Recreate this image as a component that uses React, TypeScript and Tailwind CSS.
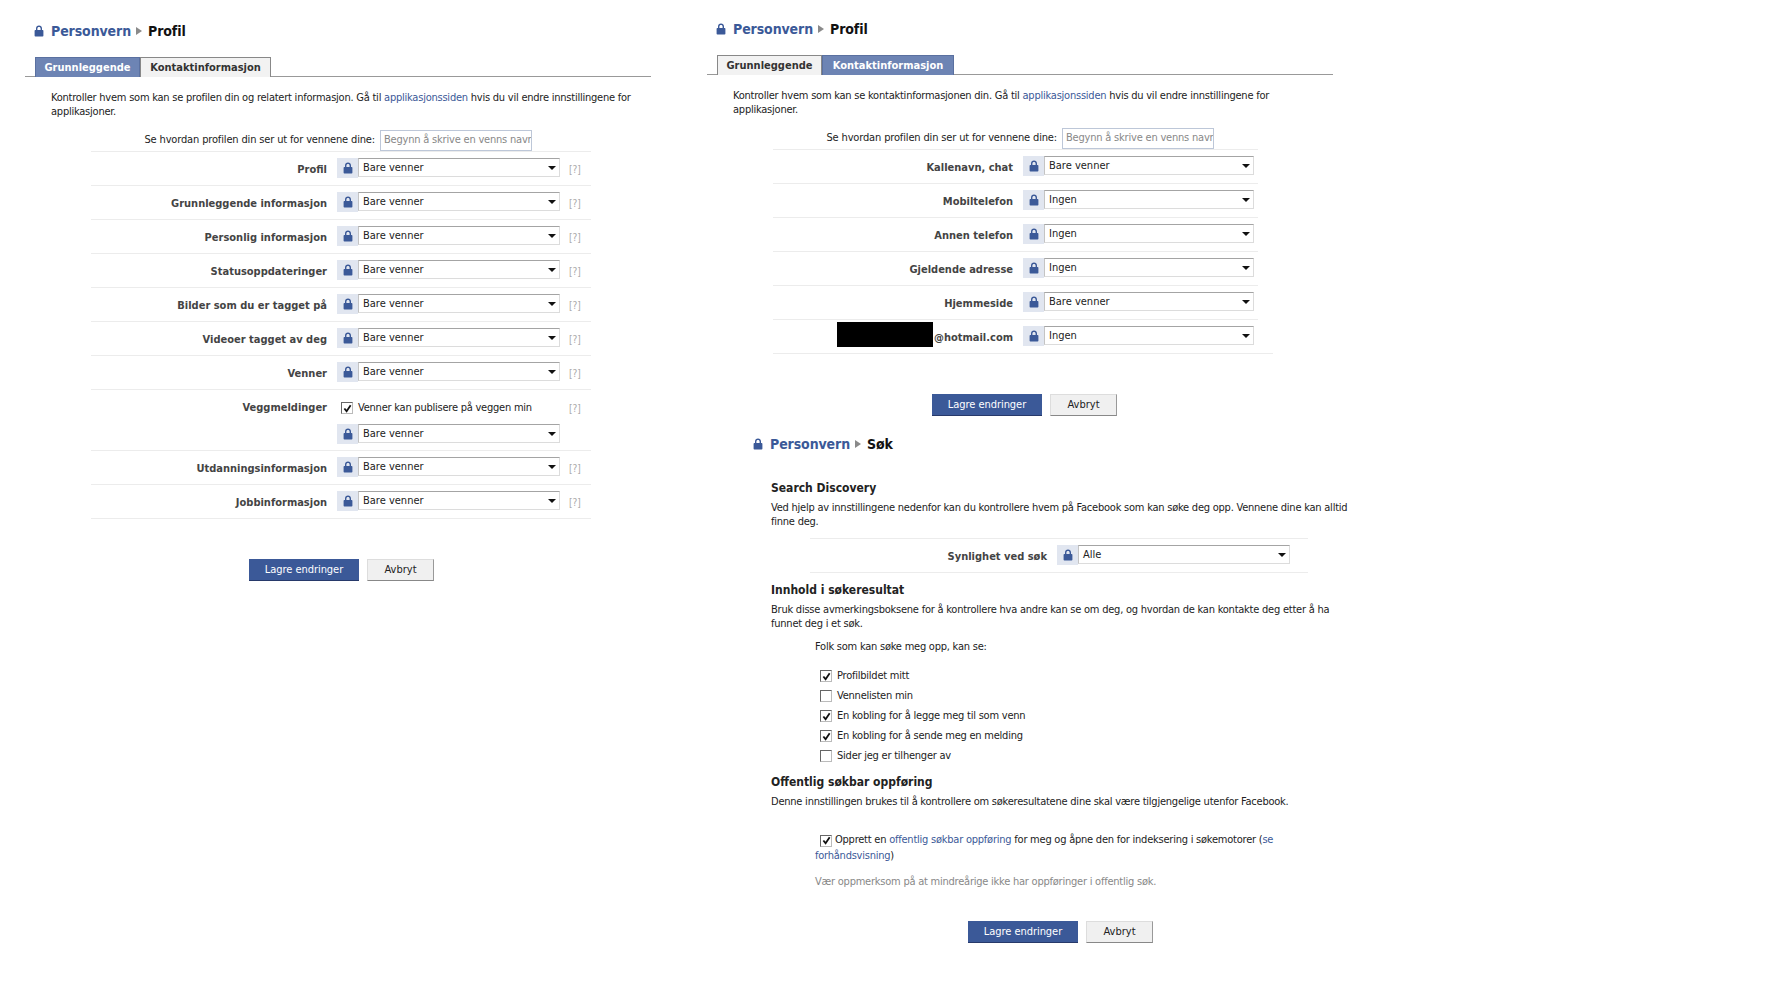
const FONT = "font-['DejaVu_Sans_Condensed','Liberation_Sans',sans-serif]";

function Lock({ className }: { className: string }) {
  return (
    <svg viewBox="0 0 10 12" className={className} fill="#3b5998">
      <path d="M2 5.5V3.6C2 1.8 3.2.6 5 .6s3 1.2 3 3v1.9H6.6V3.7C6.6 2.7 6 2 5 2s-1.6.7-1.6 1.7v1.8z" />
      <rect x="0.6" y="5" width="8.8" height="6.6" rx="0.8" />
    </svg>
  );
}

function Title({ last }: { last: string }) {
  return (
    <div className="flex items-center h-[20px] text-[14px] font-bold leading-[20px] tracking-[-0.1px]">
      <Lock className="w-[10px] h-[12px]" />
      <span className="ml-[7px] text-[#3b5998]">Personvern</span>
      <span className="ml-[5px] w-0 h-0 border-y-[4px] border-y-transparent border-l-[6px] border-l-[#8a8a8a]" />
      <span className="ml-[6px] text-[#111]">{last}</span>
    </div>
  );
}

function Tabs({ active, w1, w2 }: { active: number; w1: string; w2: string }) {
  const on = "bg-[#6d84b4] border-[#5a70a0] text-white";
  const off = "bg-[#f2f2f2] border-[#888] text-[#333]";
  return (
    <div className="flex h-[20px] border-b border-[#999]">
      <div className={`ml-[10px] h-[20px] pt-[1px] flex items-center justify-center border border-b-0 text-[11px] font-bold ${w1} ${active === 0 ? on : off}`}>Grunnleggende</div>
      <div className={`h-[20px] pt-[1px] flex items-center justify-center border border-b-0 text-[11px] font-bold ${w2} ${active === 1 ? on : off}`}>Kontaktinformasjon</div>
    </div>
  );
}

function Select({ value, width }: { value: string; width: string }) {
  return (
    <div className={`h-[19px] flex items-center justify-between pl-[4px] pr-[2px] bg-white border border-[#dcdcdc] border-t-[#a4a4a4] border-l-[#c4c4c4] text-[11px] text-[#222] ${width}`}>
      <span className="pt-[2px]">{value}</span>
      <span className="w-0 h-0 border-x-[4px] border-x-transparent border-t-[4px] border-t-[#111] mr-[1px]" />
    </div>
  );
}

function LockBox() {
  return (
    <div className="w-[21px] h-[20px] bg-[#e1e6f0] flex items-center justify-center">
      <Lock className="w-[10px] h-[12px]" />
    </div>
  );
}

function Check({ checked }: { checked: boolean }) {
  return (
    <span className="shrink-0 w-[12px] h-[12px] flex items-center justify-center bg-white border border-[#bbb] border-t-[#666] border-l-[#666]">
      {checked && (
        <svg viewBox="0 0 10 10" className="w-[9px] h-[9px]">
          <path d="M1.5 5 L4 8 L8.5 1.5" fill="none" stroke="#111" strokeWidth="2" />
        </svg>
      )}
    </span>
  );
}

function Row({ label, value, labelW, selectW, help = true, redacted = false, lineW = "" }: {
  label: string; value: string; labelW: string; selectW: string; help?: boolean; redacted?: boolean; lineW?: string;
}) {
  return (
    <div className={`h-[34px] pt-[6px] border-b border-[#ececec] flex items-start ${lineW}`}>
      <div className={`h-[20px] pt-[4px] flex items-center justify-end text-[11px] font-bold text-[#444] shrink-0 ${labelW}`}>
        {redacted && <span className="w-[96px] h-[25px] mb-[7px] mr-[1px] bg-black shrink-0" />}
        {label}
      </div>
      <div className="ml-[10px] flex">
        <LockBox />
        <Select value={value} width={selectW} />
      </div>
      {help && <span className="ml-[9px] h-[20px] pt-[2px] flex items-center text-[10px] text-[#aaa]">[?]</span>}
    </div>
  );
}

function Buttons({ ml }: { ml: string }) {
  return (
    <div className={`flex ${ml}`}>
      <div className="w-[110px] h-[22px] pt-[2px] flex items-center justify-center bg-[#3b5998] border-b border-[#27396a] text-white text-[11px] tracking-[-0.05px]">Lagre endringer</div>
      <div className="ml-[8px] w-[67px] h-[22px] flex items-center justify-center bg-[#f0f0f0] border border-[#ddd] border-b-[#888] border-r-[#999] text-[#222] text-[11px]">Avbryt</div>
    </div>
  );
}

function SearchRow({ labelW, lineW }: { labelW: string; lineW: string }) {
  return (
    <div className={`h-[22px] flex items-start border-b border-[#ececec] ${lineW}`}>
      <div className={`h-[21px] flex items-center justify-end text-[11px] tracking-[-0.15px] text-[#222] shrink-0 ${labelW}`}>Se hvordan profilen din ser ut for vennene dine:</div>
      <div className="ml-[5px] w-[152px] h-[21px] overflow-hidden whitespace-nowrap flex items-center pl-[3px] border border-[#bdc7d8] text-[11px] tracking-[-0.2px] text-[#888]">Begynn å skrive en venns navn</div>
    </div>
  );
}

const left = ["Profil", "Grunnleggende informasjon", "Personlig informasjon", "Statusoppdateringer", "Bilder som du er tagget på", "Videoer tagget av deg", "Venner"];

const right: [string, string][] = [
  ["Kallenavn, chat", "Bare venner"],
  ["Mobiltelefon", "Ingen"],
  ["Annen telefon", "Ingen"],
  ["Gjeldende adresse", "Ingen"],
  ["Hjemmeside", "Bare venner"],
];

export default function App() {
  return (
    <div className={`w-[1790px] h-[1007px] bg-white flex overflow-hidden ${FONT}`}>
      {/* Left column */}
      <div className="ml-[25px] w-[626px] pt-[21px] shrink-0">
        <div className="ml-[9px]"><Title last="Profil" /></div>
        <div className="mt-[16px]"><Tabs active={0} w1="w-[105px]" w2="w-[131px]" /></div>
        <p className="mt-[14px] ml-[26px] w-[590px] text-[11px] leading-[14px] tracking-[-0.23px] text-[#222]">
          Kontroller hvem som kan se profilen din og relatert informasjon. Gå til <span className="text-[#3b5998]">applikasjonssiden</span> hvis du vil endre innstillingene for applikasjoner.
        </p>
        <div className="mt-[11px] ml-[66px] w-[500px]">
          <SearchRow labelW="w-[284px]" lineW="" />
          {left.map((l) => <Row key={l} label={l} value="Bare venner" labelW="w-[236px]" selectW="w-[202px]" />)}
          <div className="h-[61px] border-b border-[#ececec] pt-[10px] flex items-start">
            <div className="w-[236px] h-[16px] flex items-center justify-end text-[11px] font-bold text-[#444] shrink-0">Veggmeldinger</div>
            <div className="ml-[10px]">
              <div className="h-[16px] flex items-center text-[11px] tracking-[-0.23px] text-[#222]">
                <span className="ml-[4px]"><Check checked /></span>
                <span className="ml-[5px]">Venner kan publisere på veggen min</span>
              </div>
              <div className="mt-[8px] flex">
                <LockBox />
                <Select value="Bare venner" width="w-[202px]" />
              </div>
            </div>
            <span className="ml-[9px] h-[16px] flex items-center text-[10px] text-[#aaa]">[?]</span>
          </div>
          <Row label="Utdanningsinformasjon" value="Bare venner" labelW="w-[236px]" selectW="w-[202px]" />
          <Row label="Jobbinformasjon" value="Bare venner" labelW="w-[236px]" selectW="w-[202px]" />
        </div>
        <div className="mt-[40px]"><Buttons ml="ml-[224px]" /></div>
      </div>

      {/* Right column */}
      <div className="ml-[56px] w-[700px] pt-[19px] shrink-0">
        <div className="ml-[9px]"><Title last="Profil" /></div>
        <div className="mt-[16px] w-[626px]"><Tabs active={1} w1="w-[105px]" w2="w-[132px]" /></div>
        <p className="mt-[14px] ml-[26px] w-[590px] text-[11px] leading-[14px] tracking-[-0.23px] text-[#222]">
          Kontroller hvem som kan se kontaktinformasjonen din. Gå til <span className="text-[#3b5998]">applikasjonssiden</span> hvis du vil endre innstillingene for applikasjoner.
        </p>
        <div className="mt-[11px] ml-[66px]">
          <SearchRow labelW="w-[284px]" lineW="w-[485px]" />
          {right.map(([l, v]) => <Row key={l} label={l} value={v} labelW="w-[240px]" selectW="w-[210px]" help={false} lineW="w-[485px]" />)}
          <Row label="@hotmail.com" value="Ingen" labelW="w-[240px]" selectW="w-[210px]" help={false} redacted lineW="w-[500px]" />
        </div>
        <div className="mt-[40px]"><Buttons ml="ml-[225px]" /></div>

        <div className="mt-[18px] ml-[46px]"><Title last="Søk" /></div>
        <div className="ml-[64px] w-[600px] text-[11px] leading-[14px] tracking-[-0.23px] text-[#222]">
          <h3 className="mt-[26px] text-[12px] leading-[16px] font-bold tracking-normal text-[#222]">Search Discovery</h3>
          <p className="mt-[5px]">Ved hjelp av innstillingene nedenfor kan du kontrollere hvem på Facebook som kan søke deg opp. Vennene dine kan alltid finne deg.</p>
        </div>
        <div className="mt-[9px] ml-[103px] w-[498px] h-[35px] pt-[6px] border-y border-[#ececec] flex items-start">
          <div className="w-[237px] h-[20px] pt-[4px] flex items-center justify-end text-[11px] font-bold text-[#444] shrink-0">Synlighet ved søk</div>
          <div className="ml-[10px] flex">
            <LockBox />
            <Select value="Alle" width="w-[212px]" />
          </div>
        </div>
        <div className="ml-[64px] w-[590px] text-[11px] leading-[14px] tracking-[-0.23px] text-[#222]">
          <h3 className="mt-[9px] text-[12px] leading-[16px] font-bold tracking-normal">Innhold i søkeresultat</h3>
          <p className="mt-[5px]">Bruk disse avmerkingsboksene for å kontrollere hva andre kan se om deg, og hvordan de kan kontakte deg etter å ha funnet deg i et søk.</p>
          <p className="mt-[9px] ml-[44px]">Folk som kan søke meg opp, kan se:</p>
          <div className="mt-[12px] ml-[49px]">
            {[["Profilbildet mitt", true], ["Vennelisten min", false], ["En kobling for å legge meg til som venn", true], ["En kobling for å sende meg en melding", true], ["Sider jeg er tilhenger av", false]].map(([t, c]) => (
              <div key={t as string} className="h-[20px] flex items-center">
                <Check checked={c as boolean} />
                <span className="ml-[5px]">{t as string}</span>
              </div>
            ))}
          </div>
          <h3 className="mt-[8px] text-[12px] leading-[16px] font-bold tracking-normal">Offentlig søkbar oppføring</h3>
          <p className="mt-[5px]">Denne innstillingen brukes til å kontrollere om søkeresultatene dine skal være tilgjengelige utenfor Facebook.</p>
          <div className="mt-[23px] ml-[44px] w-[480px] leading-[16px]">
            <span className="inline-block align-[-2px] ml-[5px] mr-[3px]"><Check checked /></span>
            Opprett en <span className="text-[#3b5998]">offentlig søkbar oppføring</span> for meg og åpne den for indeksering i søkemotorer (<span className="text-[#3b5998]">se forhåndsvisning</span>)
          </div>
          <p className="mt-[11px] ml-[44px] text-[#888]">Vær oppmerksom på at mindreårige ikke har oppføringer i offentlig søk.</p>
        </div>
        <div className="mt-[32px]"><Buttons ml="ml-[261px]" /></div>
      </div>
    </div>
  );
}
